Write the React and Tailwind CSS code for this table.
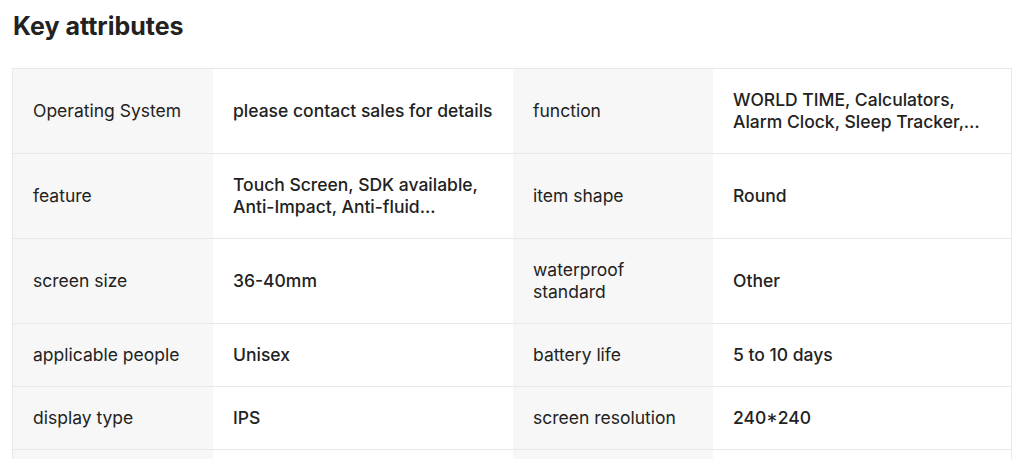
import React from "react";

const rows = [
  [["Operating System", "please contact sales for details"], ["function", "WORLD TIME, Calculators, Alarm Clock, Sleep Tracker, Timer, Stopwatch"]],
  [["feature", "Touch Screen, SDK available, Anti-Impact, Anti-fluid..."], ["item shape", "Round"]],
  [["screen size", "36-40mm"], ["waterproof standard", "Other"]],
  [["applicable people", "Unisex"], ["battery life", "5 to 10 days"]],
  [["display type", "IPS"], ["screen resolution", "240*240"]],
  [["wristband material", "Silicone"], ["connectivity", "Bluetooth"]],
];

function Cell({ label, value }) {
  return (
    <>
      <div className="bg-[#f7f7f7] px-5 py-5 flex items-center border-b border-[#e8e8e8] text-[#222] leading-[22px]">
        <span>{label}</span>
      </div>
      <div className="bg-white px-5 py-5 flex items-center border-b border-[#e8e8e8] font-medium text-[#222] leading-[22px]">
        <span className="line-clamp-2">{value}</span>
      </div>
    </>
  );
}

export default function App() {
  return (
    <div className="bg-white min-h-[459px] h-[459px] overflow-hidden px-3 pt-[10px]" style={{ fontFamily: "Inter, 'Noto Sans', sans-serif" }}>
      <h2 className="text-[25px] leading-8 font-bold text-[#222] ml-[1px]">Key attributes</h2>
      <div className="mt-[26px] w-[1000px] border border-[#e8e8e8] border-b-0 grid grid-cols-[200px_300px_200px_298px] text-[17.5px]">
        {rows.map((r, i) => (
          <React.Fragment key={i}>
            <Cell label={r[0][0]} value={r[0][1]} />
            <Cell label={r[1][0]} value={r[1][1]} />
          </React.Fragment>
        ))}
      </div>
    </div>
  );
}
